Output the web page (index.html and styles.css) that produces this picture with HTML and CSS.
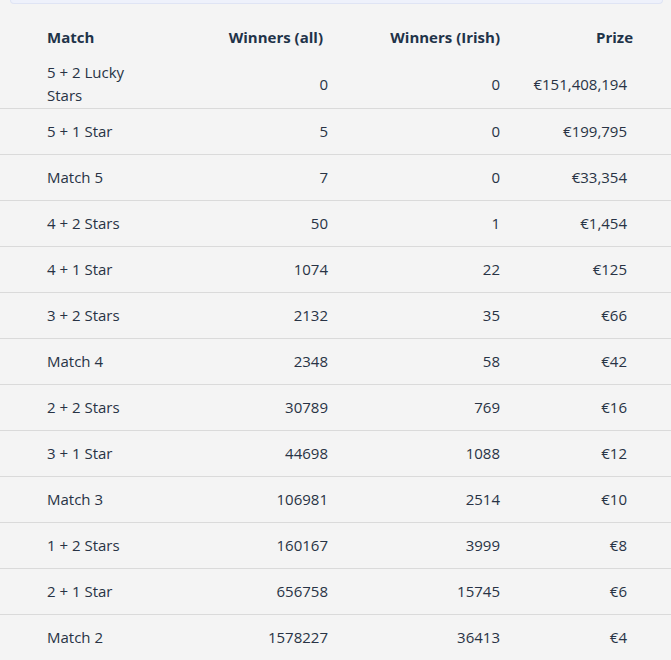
FILE: index.html
```html
<!DOCTYPE html>
<html>
<head>
<meta charset="utf-8">
<link rel="stylesheet" href="styles.css">
</head>
<body>
<div class="card-edge"></div>
<table class="prizes">
  <colgroup>
    <col class="c1"><col class="c2"><col class="c3"><col class="c4">
  </colgroup>
  <thead>
    <tr>
      <th class="h-match">Match</th>
      <th class="h-all">Winners (all)</th>
      <th class="h-irish">Winners (Irish)</th>
      <th class="h-prize">Prize</th>
    </tr>
  </thead>
  <tbody>
    <tr class="first"><td class="m">5 + 2 Lucky Stars</td><td class="n">0</td><td class="i">0</td><td class="p">€151,408,194</td></tr>
    <tr><td class="m">5 + 1 Star</td><td class="n">5</td><td class="i">0</td><td class="p">€199,795</td></tr>
    <tr><td class="m">Match 5</td><td class="n">7</td><td class="i">0</td><td class="p">€33,354</td></tr>
    <tr><td class="m">4 + 2 Stars</td><td class="n">50</td><td class="i">1</td><td class="p">€1,454</td></tr>
    <tr><td class="m">4 + 1 Star</td><td class="n">1074</td><td class="i">22</td><td class="p">€125</td></tr>
    <tr><td class="m">3 + 2 Stars</td><td class="n">2132</td><td class="i">35</td><td class="p">€66</td></tr>
    <tr><td class="m">Match 4</td><td class="n">2348</td><td class="i">58</td><td class="p">€42</td></tr>
    <tr><td class="m">2 + 2 Stars</td><td class="n">30789</td><td class="i">769</td><td class="p">€16</td></tr>
    <tr><td class="m">3 + 1 Star</td><td class="n">44698</td><td class="i">1088</td><td class="p">€12</td></tr>
    <tr><td class="m">Match 3</td><td class="n">106981</td><td class="i">2514</td><td class="p">€10</td></tr>
    <tr><td class="m">1 + 2 Stars</td><td class="n">160167</td><td class="i">3999</td><td class="p">€8</td></tr>
    <tr><td class="m">2 + 1 Star</td><td class="n">656758</td><td class="i">15745</td><td class="p">€6</td></tr>
    <tr><td class="m">Match 2</td><td class="n">1578227</td><td class="i">36413</td><td class="p">€4</td></tr>
  </tbody>
</table>
</body>
</html>
```
FILE: styles.css
```css
html, body {
  margin: 0;
  padding: 0;
  background: #f4f4f4;
}
body {
  font-family: "Open Sans", "Noto Sans", sans-serif;
  font-size: 15px;
  color: #283345;
  overflow: hidden;
}
.card-edge {
  margin: 0 8px 0 10px;
  height: 3px;
  background: #eef1fb;
  border: 1px solid #dfe4f4;
  border-top: none;
  border-radius: 0 0 8px 8px;
}
.prizes {
  width: 671px;
  table-layout: fixed;
  border-collapse: collapse;
  border-spacing: 0;
  margin-top: 10px;
}
.c1 { width: 200px; }
.c2 { width: 140px; }
.c3 { width: 172px; }
.c4 { width: 159px; }

.prizes th {
  font-weight: 700;
  color: #1f3349;
  height: 43px;
  box-sizing: border-box;
  padding: 4px 0 0 0;
  line-height: 23px;
  vertical-align: middle;
  white-space: nowrap;
}
.h-match { text-align: left; padding-left: 47px !important; }
.h-all { text-align: right; padding-right: 17px !important; }
.h-irish { text-align: right; padding-right: 12px !important; }
.h-prize { text-align: right; padding-right: 38px !important; }

.prizes td {
  height: 46px;
  padding: 2px 0 3px;
  line-height: 23px;
  vertical-align: middle;
  box-sizing: border-box;
}
.prizes .first td {
  padding: 4px 0 1px;
}
.prizes tbody tr {
  border-bottom: 1px solid #dadada;
}
.prizes tbody tr:last-child {
  border-bottom: none;
}
.m { text-align: left; padding-left: 47px !important; padding-right: 50px !important; }
.n { text-align: right; padding-right: 12px !important; }
.i { text-align: right; padding-right: 12px !important; }
.p { text-align: right; padding-right: 44px !important; }
```
